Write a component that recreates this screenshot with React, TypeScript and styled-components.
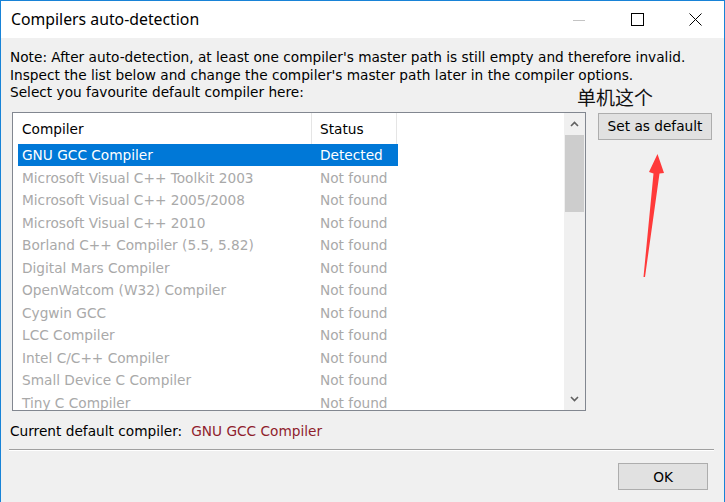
import React from 'react';
import styled, { createGlobalStyle } from 'styled-components';

const GlobalStyle = createGlobalStyle`
    html, body {
        margin: 0;
        padding: 0;
        background: #f0f0f0;
    }
    * {
        box-sizing: border-box;
    }
`;

const UI_FONT = `"DejaVu Sans", "Liberation Sans", Verdana, sans-serif`;

const Window = styled.div`
    position: relative;
    width: 725px;
    height: 502px;
    border: 1px solid #1883d7;
    border-bottom: none;
    background: #f0f0f0;
    font-family: ${UI_FONT};
    font-size: 13.7px;
    color: #000;
    overflow: hidden;
`;

const TitleBar = styled.div`
    height: 37px;
    background: #fff;
    display: flex;
    align-items: center;
`;

const Title = styled.div`
    flex: 1;
    padding-left: 10px;
    font-family: "Noto Sans", "Liberation Sans", sans-serif;
    font-size: 15.8px;
    padding-bottom: 1px;
`;

const CaptionButton = styled.div`
    width: 58px;
    height: 37px;
    display: flex;
    align-items: center;
    justify-content: center;
`;

const Body = styled.div`
    padding: 11px 10px 0 9px;
`;

const Note = styled.p`
    margin: 0;
    line-height: 17.5px;
`;

const MainRow = styled.div`
    display: flex;
    align-items: flex-start;
    margin-top: 10px;
    padding-left: 2px;
`;

const ListBox = styled.div`
    width: 574px;
    height: 299px;
    border: 1px solid #828790;
    background: #fff;
    display: flex;
`;

const ListArea = styled.div`
    flex: 1;
    overflow: hidden;
`;

const HeaderRow = styled.div`
    display: grid;
    grid-template-columns: 299px 85px;
    height: 31px;
`;

const HeaderCell = styled.div<{ $pad: number }>`
    display: flex;
    align-items: center;
    padding-left: ${p => p.$pad}px;
    border-right: 1px solid #e5e5e5;
    padding-top: 1px;
`;

const Row = styled.div<{ $selected?: boolean }>`
    display: grid;
    grid-template-columns: 294px 86px;
    margin-left: 5px;
    width: 380px;
    height: 22.5px;
    padding-top: 1px;
    align-items: center;
    background: ${p => (p.$selected ? '#0078d7' : 'transparent')};
    color: ${p => (p.$selected ? '#fff' : '#a9a9a9')};
`;

const Cell = styled.div<{ $pad: number }>`
    padding-left: ${p => p.$pad}px;
    white-space: nowrap;
`;

const ScrollBar = styled.div`
    width: 21px;
    background: #f0f0f0;
    display: flex;
    flex-direction: column;
`;

const ScrollArrow = styled.div`
    height: 22px;
    display: flex;
    align-items: center;
    justify-content: center;
`;

const ScrollTrack = styled.div`
    flex: 1;
    padding: 0 1px;
`;

const Thumb = styled.div`
    height: 77px;
    background: #cdcdcd;
`;

const Side = styled.div`
    margin-left: 12px;
    margin-top: 1px;
`;

const Button = styled.button<{ $w: number }>`
    width: ${p => p.$w}px;
    height: 27px;
    background: #e1e1e1;
    border: 1px solid #adadad;
    font-family: ${UI_FONT};
    font-size: 13.7px;
    color: #000;
    padding: 0;
    margin: 0;
`;

const Current = styled.div`
    margin-top: 12px;
    line-height: 17.5px;
    display: flex;
`;

const CurrentValue = styled.span`
    margin-left: 9px;
    color: #8f1d2d;
`;

const Separator = styled.div`
    margin-top: 9px;
    margin-left: -1px;
    width: 705px;
    height: 2px;
    border-top: 1px solid #a0a0a0;
    border-bottom: 1px solid #fff;
`;

const Footer = styled.div`
    display: flex;
    justify-content: flex-end;
    margin-top: 12px;
    padding-right: 6px;
`;

const Annotation = styled.div`
    position: absolute;
    left: 576px;
    top: 84px;
    font-family: "Noto Sans CJK SC", sans-serif;
    font-size: 19px;
    line-height: 24px;
    color: #111;
    pointer-events: none;
`;

const ArrowMark = styled.svg`
    position: absolute;
    left: 0;
    top: 0;
    pointer-events: none;
`;

const compilers: [string, string][] = [
    ['GNU GCC Compiler', 'Detected'],
    ['Microsoft Visual C++ Toolkit 2003', 'Not found'],
    ['Microsoft Visual C++ 2005/2008', 'Not found'],
    ['Microsoft Visual C++ 2010', 'Not found'],
    ['Borland C++ Compiler (5.5, 5.82)', 'Not found'],
    ['Digital Mars Compiler', 'Not found'],
    ['OpenWatcom (W32) Compiler', 'Not found'],
    ['Cygwin GCC', 'Not found'],
    ['LCC Compiler', 'Not found'],
    ['Intel C/C++ Compiler', 'Not found'],
    ['Small Device C Compiler', 'Not found'],
    ['Tiny C Compiler', 'Not found'],
];

const App = () => {
    return (
        <Window>
            <GlobalStyle />
            <TitleBar>
                <Title>Compilers auto-detection</Title>
                <CaptionButton>
                    <svg width="12" height="12"><line x1="0" y1="6.5" x2="12" y2="6.5" stroke="#c4c4c4" /></svg>
                </CaptionButton>
                <CaptionButton>
                    <svg width="13" height="13"><rect x="0.5" y="0.5" width="12" height="12" fill="none" stroke="#000" /></svg>
                </CaptionButton>
                <CaptionButton>
                    <svg width="13" height="13"><path d="M0.5 0.5 L12.5 12.5 M12.5 0.5 L0.5 12.5" stroke="#000" /></svg>
                </CaptionButton>
            </TitleBar>
            <Body>
                <Note>
                    Note: After auto-detection, at least one compiler's master path is still empty and therefore invalid.<br />
                    Inspect the list below and change the compiler's master path later in the compiler options.<br />
                    Select you favourite default compiler here:
                </Note>
                <MainRow>
                    <ListBox>
                        <ListArea>
                            <HeaderRow>
                                <HeaderCell $pad={9}>Compiler</HeaderCell>
                                <HeaderCell $pad={8}>Status</HeaderCell>
                            </HeaderRow>
                            {compilers.map(([name, status], i) => (
                                <Row key={name} $selected={i === 0}>
                                    <Cell $pad={4}>{name}</Cell>
                                    <Cell $pad={8}>{status}</Cell>
                                </Row>
                            ))}
                        </ListArea>
                        <ScrollBar>
                            <ScrollArrow>
                                <svg width="9" height="6"><polyline points="1,5 4.5,1.5 8,5" fill="none" stroke="#606060" strokeWidth="1.6" /></svg>
                            </ScrollArrow>
                            <ScrollTrack><Thumb /></ScrollTrack>
                            <ScrollArrow>
                                <svg width="9" height="6"><polyline points="1,1 4.5,4.5 8,1" fill="none" stroke="#606060" strokeWidth="1.6" /></svg>
                            </ScrollArrow>
                        </ScrollBar>
                    </ListBox>
                    <Side>
                        <Button $w={114}>Set as default</Button>
                    </Side>
                </MainRow>
                <Current>
                    Current default compiler:<CurrentValue>GNU GCC Compiler</CurrentValue>
                </Current>
                <Separator />
                <Footer>
                    <Button $w={90}>OK</Button>
                </Footer>
            </Body>
            <Annotation>单机这个</Annotation>
            <ArrowMark width="725" height="502" viewBox="0 0 725 502">
                <polygon
                    points="656.5,153 663,172 658.5,172.5 644,276 642.5,276 652.5,172.5 648,171"
                    fill="#ff3a3a"
                />
            </ArrowMark>
        </Window>
    );
};

export default App;
